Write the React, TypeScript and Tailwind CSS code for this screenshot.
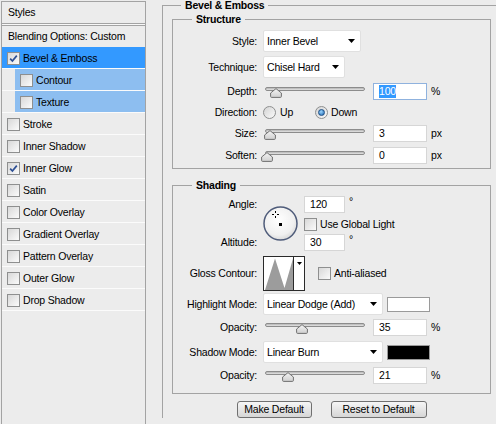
import React from 'react';

const effects = [
  { name: 'Bevel & Emboss', checked: true, active: true },
  { name: 'Contour', sub: true },
  { name: 'Texture', sub: true },
  { name: 'Stroke' },
  { name: 'Inner Shadow' },
  { name: 'Inner Glow', checked: true },
  { name: 'Satin' },
  { name: 'Color Overlay' },
  { name: 'Gradient Overlay' },
  { name: 'Pattern Overlay' },
  { name: 'Outer Glow' },
  { name: 'Drop Shadow' },
];

const Check = ({ checked }: { checked?: boolean }) => (
  <span className="w-[13px] h-[13px] shrink-0 border border-[#8e8f8f] bg-gradient-to-br from-[#d8d8d8] to-[#fbfbfb] flex items-center justify-center">
    {checked && (
      <svg width="9" height="9" viewBox="0 0 9 9">
        <path d="M1.2 4.6 L3.4 7 L7.8 1.6" fill="none" stroke="#2d4f94" strokeWidth="1.7" />
      </svg>
    )}
  </span>
);

const Radio = ({ on }: { on?: boolean }) => (
  <span className="w-[13px] h-[13px] shrink-0 rounded-full border border-[#8e8f8f] bg-gradient-to-br from-[#d4d4d4] to-[#fafafa] flex items-center justify-center">
    {on && (
      <span className="w-[7px] h-[7px] rounded-full border border-[#1d4f86] bg-[radial-gradient(circle_at_40%_35%,#9bd6ff,#1b63ad)]" />
    )}
  </span>
);

const Caret = () => (
  <svg width="7" height="4" viewBox="0 0 7 4" className="shrink-0">
    <path d="M0 0 H7 L3.5 4 Z" fill="#000" />
  </svg>
);

const Select = ({ value, width }: { value: string; width: string }) => (
  <div className={`${width} h-[22px] shrink-0 bg-white border border-[#e0e0e0] rounded-[2px] flex items-center justify-between pl-[3px] pr-[5px]`}>
    <span>{value}</span>
    <Caret />
  </div>
);

const Field = ({ value, width = 'w-[54px]', focus }: { value: string; width?: string; focus?: boolean }) => (
  <div
    className={`${width} h-[17px] shrink-0 bg-white border flex items-center pl-[5px] ${
      focus ? 'border-[#8fb2de]' : 'border-[#d6d6d6]'
    }`}
  >
    {focus ? <span className="bg-[#3399ff] text-white leading-[13px]">{value}</span> : value}
  </div>
);

const Slider = ({ pos }: { pos: number }) => (
  <div className="relative w-[104px] h-[22px] shrink-0">
    <div className="absolute left-[2px] w-[100px] top-[7px] h-[4px] rounded-full border border-[#8c8c8c] bg-gradient-to-b from-[#b4b4b4] to-[#e6e6e6]" />
    <svg className="absolute top-[8px]" style={{ left: pos - 6 }} width="12" height="10" viewBox="0 0 12 10">
      <defs>
        <linearGradient id="thumb" x1="0" y1="0" x2="0" y2="1">
          <stop offset="0" stopColor="#f4f4f4" />
          <stop offset="1" stopColor="#cfcfcf" />
        </linearGradient>
      </defs>
      <path d="M6 0.6 L11.4 5 L11.4 8.4 Q11.4 9.4 10.4 9.4 L1.6 9.4 Q0.6 9.4 0.6 8.4 L0.6 5 Z" fill="url(#thumb)" stroke="#707070" strokeWidth="1" />
    </svg>
  </div>
);

const Label = ({ children }: { children: React.ReactNode }) => (
  <span className="w-[84px] shrink-0 text-right">{children}</span>
);

const SliderRow = ({ label, pos, value, unit, focus }: { label: string; pos: number; value: string; unit: string; focus?: boolean }) => (
  <div className="h-[22px] flex items-center gap-[6px]">
    <Label>{label}</Label>
    <Slider pos={pos} />
    <Field value={value} focus={focus} />
    <span className="ml-[-2px]">{unit}</span>
  </div>
);

const Swatch = ({ color }: { color: string }) => (
  <span className={`ml-[4px] w-[43px] h-[15px] border border-[#9a9a9a] ${color}`} />
);

const Button = ({ children, width }: { children: React.ReactNode; width: string }) => (
  <div className={`${width} h-[17px] rounded-[3px] border border-[#707070] bg-gradient-to-b from-[#f6f6f6] to-[#d6d6d6] flex items-center justify-center`}>
    {children}
  </div>
);

const Dial = () => (
  <svg width="35" height="35" viewBox="0 0 35 35">
    <defs>
      <radialGradient id="dial" cx="45%" cy="40%" r="65%">
        <stop offset="0" stopColor="#ffffff" />
        <stop offset="0.7" stopColor="#f0f0f0" />
        <stop offset="1" stopColor="#d2d2d2" />
      </radialGradient>
    </defs>
    <circle cx="17.5" cy="17.5" r="16.5" fill="url(#dial)" stroke="#4f5c7a" strokeWidth="1.5" />
    <g fill="#000">
      <rect x="12" y="5" width="1" height="2" />
      <rect x="12" y="10" width="1" height="2" />
      <rect x="9" y="8" width="2" height="1" />
      <rect x="14" y="8" width="2" height="1" />
    </g>
    <rect x="16" y="17" width="3" height="3" fill="#000" />
  </svg>
);

const GlossContour = () => (
  <div className="w-[42px] h-[35px] shrink-0 border border-[#2a2a2a] bg-white flex">
    <svg width="29" height="33" viewBox="0 0 29 33" className="shrink-0">
      <path d="M1 33 L11 1.5 L20.5 31 L29 1.5 L29 33 Z" fill="#9c9c9c" />
    </svg>
    <div className="flex-1 border-l border-[#2a2a2a] flex justify-center pt-[5px]">
      <svg width="5" height="3" viewBox="0 0 5 3">
        <path d="M0 0 H5 L2.5 3 Z" fill="#000" />
      </svg>
    </div>
  </div>
);

export default function App() {
  return (
    <div className="w-[496px] h-[424px] overflow-hidden bg-[#ececec] flex items-start text-[10.5px] leading-[13px] text-black tracking-[-0.2px] font-['Liberation_Sans',Arial,sans-serif]">
      {/* Styles list */}
      <div className="ml-px mt-px w-[145px] h-[440px] shrink-0 border border-[#a3a3a3] flex flex-col">
        <div className="h-[22px] border-b border-[#a3a3a3] flex items-center pl-[6px]">Styles</div>
        <div className="h-px bg-[#f8f8f8]" />
        <div className="border-t border-[#a3a3a3]" />
        <div className="h-[21px] flex items-center pl-[6px]">Blending Options: Custom</div>
        {effects.map((fx) => (
          <div key={fx.name} className="h-[22px] border-b border-[#fbfbfb] flex">
            <div
              className={`flex-1 flex items-center gap-[3px] pl-[5px] pt-px ${fx.sub ? 'ml-[13px] bg-[#8dbef0]' : ''} ${
                fx.active ? 'bg-[#3399ff]' : ''
              }`}
            >
              <Check checked={fx.checked} />
              <span>{fx.name}</span>
            </div>
          </div>
        ))}
      </div>

      {/* Bevel & Emboss settings */}
      <div className="pl-[16px] shrink-0">
        <fieldset className="-mt-px w-[360px] border-t border-l border-[#a3a3a3] pl-[9px]">
          <legend className="ml-[9px] px-[4px] font-bold leading-[13px]">Bevel &amp; Emboss</legend>

          <fieldset className="mt-px w-[319px] border border-[#a3a3a3] pt-[4px] pb-[2px]">
            <legend className="ml-[19px] px-[4px] font-bold leading-[13px]">Structure</legend>
            <div className="h-[22px] flex items-center gap-[6px]">
              <Label>Style:</Label>
              <Select value="Inner Bevel" width="w-[98px]" />
            </div>
            <div className="mt-[4px] h-[22px] flex items-center gap-[6px]">
              <Label>Technique:</Label>
              <Select value="Chisel Hard" width="w-[82px]" />
            </div>
            <div className="mt-[2px]">
              <SliderRow label="Depth:" pos={13} value="100" unit="%" focus />
            </div>
            <div className="h-[20px] flex items-center gap-[6px]">
              <Label>Direction:</Label>
              <div className="w-[46px] flex items-center gap-[4px]">
                <Radio />
                <span>Up</span>
              </div>
              <div className="flex items-center gap-[3px]">
                <Radio on />
                <span>Down</span>
              </div>
            </div>
            <SliderRow label="Size:" pos={7} value="3" unit="px" />
            <SliderRow label="Soften:" pos={4} value="0" unit="px" />
          </fieldset>

          <fieldset className="mt-[10px] w-[319px] border border-[#a3a3a3] pt-[4px] pb-[7px]">
            <legend className="ml-[19px] px-[4px] font-bold leading-[13px]">Shading</legend>
            <div className="h-[55px] flex gap-[6px]">
              <div className="w-[84px] shrink-0 flex flex-col justify-between text-right">
                <span className="leading-[17px]">Angle:</span>
                <span className="leading-[17px]">Altitude:</span>
              </div>
              <div className="mt-[10px] w-[35px] h-[35px] shrink-0">
                <Dial />
              </div>
              <div className="flex flex-col">
                <div className="flex items-start gap-[4px]">
                  <Field value="120" width="w-[41px]" />
                  <span className="leading-[10px]">°</span>
                </div>
                <div className="mt-[5px] h-[13px] flex items-center gap-[3px]">
                  <Check />
                  <span>Use Global Light</span>
                </div>
                <div className="mt-[3px] flex items-start gap-[4px]">
                  <Field value="30" width="w-[41px]" />
                  <span className="leading-[10px]">°</span>
                </div>
              </div>
            </div>
            <div className="mt-[5px] h-[35px] flex items-center gap-[6px]">
              <Label>Gloss Contour:</Label>
              <GlossContour />
              <div className="ml-[7px] flex items-center gap-[3px]">
                <Check />
                <span>Anti-aliased</span>
              </div>
            </div>
            <div className="mt-[2px] h-[22px] flex items-center gap-[6px]">
              <Label>Highlight Mode:</Label>
              <div className="flex items-center">
                <Select value="Linear Dodge (Add)" width="w-[120px]" />
                <Swatch color="bg-white" />
              </div>
            </div>
            <div className="mt-px">
              <SliderRow label="Opacity:" pos={39} value="35" unit="%" />
            </div>
            <div className="mt-[3px] h-[22px] flex items-center gap-[6px]">
              <Label>Shadow Mode:</Label>
              <div className="flex items-center">
                <Select value="Linear Burn" width="w-[120px]" />
                <Swatch color="bg-black" />
              </div>
            </div>
            <div className="mt-px">
              <SliderRow label="Opacity:" pos={25} value="21" unit="%" />
            </div>
          </fieldset>

          <div className="mt-[7px] w-[319px] flex justify-center gap-[19px]">
            <Button width="w-[75px]">Make Default</Button>
            <Button width="w-[96px]">Reset to Default</Button>
          </div>
        </fieldset>
      </div>
    </div>
  );
}
